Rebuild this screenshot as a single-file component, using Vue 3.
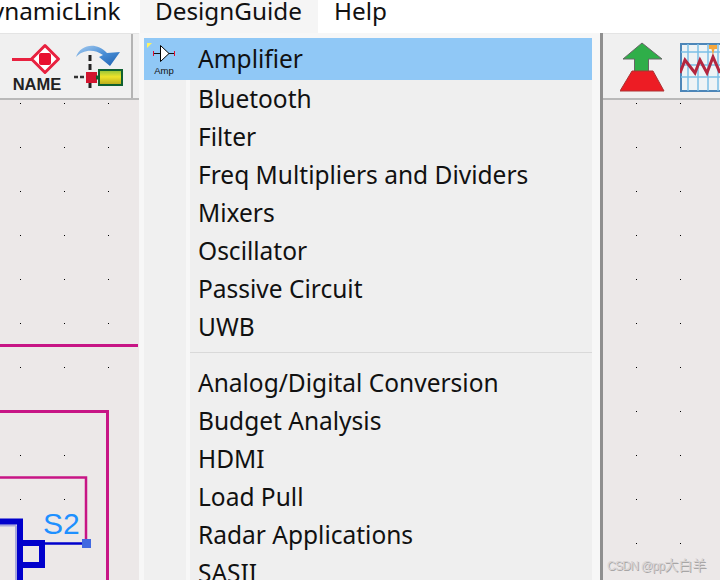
<script setup>
const groupA = ['Bluetooth','Filter','Freq Multipliers and Dividers','Mixers','Oscillator','Passive Circuit','UWB']
const groupB = ['Analog/Digital Conversion','Budget Analysis','HDMI','Load Pull','Radar Applications','SASII']
</script>

<template>
  <div class="app">
    <div class="menubar">
      <span class="mi first">DynamicLink</span>
      <span class="mi active">DesignGuide</span>
      <span class="mi help">Help</span>
    </div>
    <div class="toolbar">
      <div class="tools-left">
        <div class="name-tool">
          <svg width="50" height="34" viewBox="0 0 50 34">
            <path d="M0 17.500H20" stroke="#e8213f" stroke-width="3"/>
            <path d="M33 3.500 L46.500 17 L33 30.500 L19.500 17Z" fill="#fff" stroke="#e8213f" stroke-width="3" stroke-linejoin="round"/>
            <rect x="27" y="11" width="12" height="12" rx="2" fill="#e8102f"/>
          </svg>
          <span class="name-label">NAME</span>
        </div>
        <svg class="pin-tool" width="50" height="50" viewBox="0 0 50 50">
          <defs>
            <linearGradient id="arc" x1="0" y1="0" x2="1" y2="1">
              <stop offset="0" stop-color="#a9cdf0"/>
              <stop offset="0.5" stop-color="#4a8fd6"/>
              <stop offset="1" stop-color="#1c5fb0"/>
            </linearGradient>
            <linearGradient id="cyl" x1="0" y1="0" x2="0" y2="1">
              <stop offset="0" stop-color="#8fc23a"/>
              <stop offset="0.45" stop-color="#eee32a"/>
              <stop offset="1" stop-color="#b6a81c"/>
            </linearGradient>
          </defs>
          <path d="M2 15 C6 3 22 -1 33 11 L46 10 L36 24 L25 15 L29 13 C20 6 8 8 2 15Z" fill="url(#arc)"/>
          <path d="M16 13V48" stroke="#222" stroke-width="3" stroke-dasharray="6 3"/>
          <path d="M0 35H10" stroke="#333" stroke-width="2.500" stroke-dasharray="4 2"/>
          <rect x="12" y="30" width="11" height="11" fill="#d2152f"/>
          <path d="M22 35.500H27" stroke="#0f5f2c" stroke-width="4"/>
          <rect x="25" y="28" width="23" height="15" fill="url(#cyl)" stroke="#0f6030" stroke-width="2"/>
        </svg>
      </div>
      <div class="tools-right">
        <svg width="46" height="50" viewBox="0 0 46 50">
          <path d="M22 1 L42 17 H28.500 V30 H14.500 V17 H3Z" fill="#2fae49" stroke="#666" stroke-width="1"/>
          <path d="M12 29 H33 L44 49 H0Z" fill="#ed1c24" stroke="#a33" stroke-width="1"/>
        </svg>
        <svg class="chart" width="40" height="50" viewBox="0 0 40 50">
          <rect x="1" y="2" width="44" height="47" fill="#eef3f5" stroke="#4d86b8" stroke-width="2"/>
          <path d="M8 2V49M18 2V49M28 2V49M38 2V49M1 10H45M1 23H45M1 35H45" stroke="#7cc0e6" stroke-width="1.500"/>
          <path d="M0 31 L5 18 L15 31 L20 18 L27 31 L33 15 L40 31" stroke="#b3263f" stroke-width="3" fill="none"/>
          <path d="M29 3H37V7H34.500L33 13L31.500 7H29Z" fill="#f5a63c"/>
        </svg>
      </div>
    </div>
    <div class="canvas">
      <svg class="drawing" width="720" height="480" viewBox="0 100 720 480">
        <defs>
          <pattern id="grid" x="20" y="103" width="44" height="44" patternUnits="userSpaceOnUse">
            <rect width="1" height="1" fill="#000"/>
          </pattern>
        </defs>
        <rect x="0" y="100" width="720" height="480" fill="url(#grid)"/>
        <path d="M0 345.500H138" stroke="#c71585" stroke-width="3" fill="none"/>
        <path d="M0 411.500H107.500V580" stroke="#c71585" stroke-width="3" fill="none"/>
        <path d="M0 477.500H86V541" stroke="#c71585" stroke-width="2.500" fill="none"/>
        <path d="M16 525.500V580M0 525.500H16" stroke="#a8a8dc" stroke-width="2" fill="none"/>
        <path d="M0 521.500H20V580" stroke="#0000cc" stroke-width="6" fill="none"/>
        <path d="M22 543H42V565H22" stroke="#0000cc" stroke-width="6" fill="none"/>
        <path d="M44 543.500H84" stroke="#0000cc" stroke-width="2.500"/>
        <rect x="82" y="539" width="9" height="9" fill="#4169e1"/>
        <text x="43" y="534" class="s2">S2</text>
      </svg>
      <span class="watermark"><span class="latin">CSDN @pp</span><span class="cjk">大白羊</span></span>
    </div>

    <div class="menu">
      <div class="gutter"></div>
      <div class="list">
        <div class="row current">
          <div class="ico">
            <svg width="30" height="24" viewBox="0 0 30 24">
              <path d="M0 0H5L0 5Z" fill="#fff35c"/>
              <path d="M6 10.500H13M22 10.500H28" stroke="#111" stroke-width="1"/>
              <path d="M13.500 2.500L22 10.500L13.500 18.500Z" fill="#fff" stroke="#000" stroke-width="1"/>
              <path d="M6.500 8V13M27.500 8V13" stroke="#e01030" stroke-width="1"/>
            </svg>
            <span class="amp">Amp</span>
          </div>
          <span class="label">Amplifier</span>
        </div>
        <div v-for="t in groupA" :key="t" class="row"><span class="label">{{ t }}</span></div>
        <div class="sep"></div>
        <div v-for="t in groupB" :key="t" class="row"><span class="label">{{ t }}</span></div>
      </div>
    </div>
  </div>
</template>

<style>
html, body { margin: 0; background: #fff; overflow: hidden; }
</style>

<style scoped>
.app {
  position: relative;
  width: 720px;
  height: 580px;
  overflow: hidden;
  display: flex;
  flex-direction: column;
  font-family: "Noto Sans", "Open Sans", sans-serif;
  color: #111;
  background: #ece8e8;
}
.menubar {
  height: 33px;
  flex: none;
  background: #fff;
  display: flex;
  font-size: 24.300px;
  line-height: 21px;
  overflow: hidden;
}
.mi { display: block; height: 33px; white-space: nowrap; }
.first { margin-left: -26px; width: 166px; flex: none; }
.active { box-sizing: border-box; width: 178px; padding-left: 15px; background: #f5f5f5; flex: none; }
.help { margin-left: 16px; }
.toolbar {
  flex: none;
  background: #f0f0f0;
  border-top: 1px solid #e4e4e4;
  border-bottom: 2px solid #b9b9b9;
  display: flex;
  justify-content: space-between;
  height: 64px;
}
.tools-left { width: 133px; border-right: 2px solid #b4b4b4; display: flex; padding-left: 12px; box-sizing: border-box; gap: 12px; }
.name-tool { display: flex; flex-direction: column; align-items: center; padding-top: 8px; width: 50px; }
.name-label { font-family: "Liberation Sans", sans-serif; font-size: 16.500px; font-weight: 700; line-height: 16px; color: #222; }
.pin-tool { margin-top: 8px; flex: none; }
.tools-right { display: flex; gap: 14px; padding-top: 8px; width: 100px; overflow: hidden; flex: none; }
.chart { flex: none; }
.canvas { flex: 1; position: relative; overflow: hidden; }
.drawing { position: absolute; left: 0; top: 0; display: block; }
.s2 { font-family: "Liberation Sans", sans-serif; font-size: 30px; fill: #1e90ff; }
.watermark {
  position: absolute;
  left: 607px;
  bottom: 6px;
  font-size: 12px;
  line-height: 16px;
  color: #d8d4d4;
  text-shadow: 1px 1px 0 #a8a6a6;
  font-family: "Liberation Sans", "Noto Sans CJK SC", sans-serif;
  white-space: nowrap;
}
.latin { letter-spacing: -0.7px; }
.cjk { font-size: 14px; font-family: "Noto Sans CJK SC", sans-serif; }
.menu {
  position: absolute;
  left: 139px;
  top: 33px;
  width: 461px;
  height: 547px;
  background: #f7f7f7;
  box-shadow: 3px 0 0 #8f8f8f;
  display: flex;
  padding-top: 5px;
  box-sizing: border-box;
}
.gutter {
  position: absolute;
  left: 5px;
  top: 5px;
  bottom: 0;
  width: 42px;
  background: #f0f0f0;
}
.list { position: relative; margin-left: 5px; width: 448px; background: linear-gradient(to right, transparent 46px, #efefef 46px); }
.row { height: 38px; display: flex; align-items: center; padding-left: 54px; font-size: 24.500px; white-space: nowrap; }
.current { height: 42px; background: #90c8f6; position: relative; }
.ico { position: absolute; left: 3px; top: 5px; width: 30px; display: flex; flex-direction: column; align-items: center; }
.ico svg { display: block; }
.amp { font-family: "Liberation Sans", sans-serif; font-size: 9.500px; line-height: 9px; color: #111; margin-left: 4px; margin-top: -1px; }
.label { line-height: 38px; transform: translateY(-0.5px); }
.sep { height: 1px; margin: 6px 0 11px 46px; background: #d9d9d9; }
</style>
